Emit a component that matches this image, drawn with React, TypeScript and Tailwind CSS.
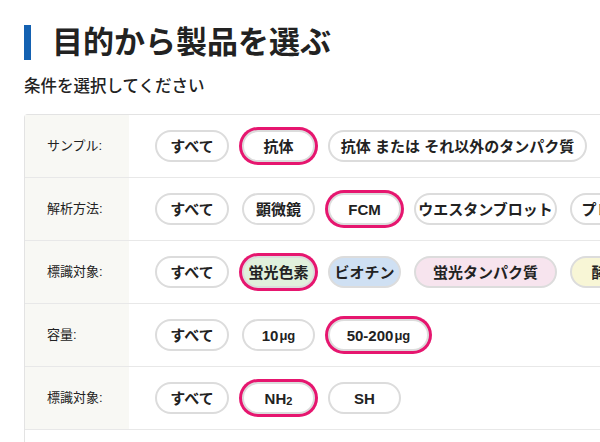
const jp = { fontFamily: '"Liberation Sans", "Noto Sans CJK JP", sans-serif' };

type Pill = { label: React.ReactNode; w: string; selected?: boolean; bg?: string };

type Row = { name: string; pills: Pill[] };

const rows: Row[] = [
  {
    name: "サンプル:",
    pills: [
      { label: "すべて", w: "w-[74px]" },
      { label: "抗体", w: "w-[73px]", selected: true },
      { label: "抗体 または それ以外のタンパク質", w: "w-[259px]" },
    ],
  },
  {
    name: "解析方法:",
    pills: [
      { label: "すべて", w: "w-[74px]" },
      { label: "顕微鏡", w: "w-[73px]" },
      { label: "FCM", w: "w-[73px]", selected: true },
      { label: "ウエスタンブロット", w: "w-[143px]" },
      { label: "プレートリーダー", w: "w-[143px]" },
    ],
  },
  {
    name: "標識対象:",
    pills: [
      { label: "すべて", w: "w-[74px]" },
      { label: "蛍光色素", w: "w-[73px]", selected: true, bg: "bg-[#e0f0dc]" },
      { label: "ビオチン", w: "w-[73px]", bg: "bg-[#cfe0f3]" },
      { label: "蛍光タンパク質", w: "w-[143px]", bg: "bg-[#f7e4ee]" },
      { label: "酵素", w: "w-[73px]", bg: "bg-[#f8f6d6]" },
    ],
  },
  {
    name: "容量:",
    pills: [
      { label: "すべて", w: "w-[74px]" },
      {
        label: (
          <>
            10<span className="ml-px text-[13px]">μg</span>
          </>
        ),
        w: "w-[73px]",
      },
      {
        label: (
          <>
            50-200<span className="ml-px text-[13px]">μg</span>
          </>
        ),
        w: "w-[101px]",
        selected: true,
      },
    ],
  },
  {
    name: "標識対象:",
    pills: [
      { label: "すべて", w: "w-[74px]" },
      {
        label: (
          <>
            NH<span className="relative top-[3px] text-[11px]">2</span>
          </>
        ),
        w: "w-[73px]",
        selected: true,
      },
      { label: "SH", w: "w-[73px]" },
    ],
  },
];

function PillButton({ label, w, selected, bg }: Pill) {
  return (
    <button
      className={`flex h-[32px] ${w} shrink-0 items-center justify-center whitespace-nowrap rounded-full border-2 border-[#dcdcdc] text-[15px] font-bold leading-none text-[#222] ${bg ?? "bg-white"} ${selected ? "ring-3 ring-[#e6166f]" : ""}`}
      style={jp}
    >
      {label}
    </button>
  );
}

export default function App() {
  return (
    <div className="h-[442px] w-[600px] overflow-hidden bg-white pl-6" style={jp}>
      <div className="mt-[25px] flex h-[35px] items-center gap-[21px]">
        <div className="h-[35px] w-[7px] bg-[#1461b1]" />
        <h1 className="text-[31px] font-bold leading-none text-[#222]">目的から製品を選ぶ</h1>
      </div>
      <p className="mt-[14px] text-[16.5px] font-medium leading-6 text-[#222]">条件を選択してください</p>

      <div className="mt-[16px] w-[640px] rounded-tl-[4px] border-l border-t border-[#e3e3e3]">
        {rows.map((row, i) => (
          <div key={i} className="flex h-[63px] border-b border-[#e8e8e8]">
            <div className="flex w-[104px] shrink-0 items-center bg-[#f8f8f4] pl-[22px] text-[13px] text-[#222]">
              {row.name}
            </div>
            <div className="flex items-center gap-[13px] pl-[26px]">
              {row.pills.map((p, j) => (
                <PillButton key={j} {...p} />
              ))}
            </div>
          </div>
        ))}
        <div className="h-[40px]" />
      </div>
    </div>
  );
}
